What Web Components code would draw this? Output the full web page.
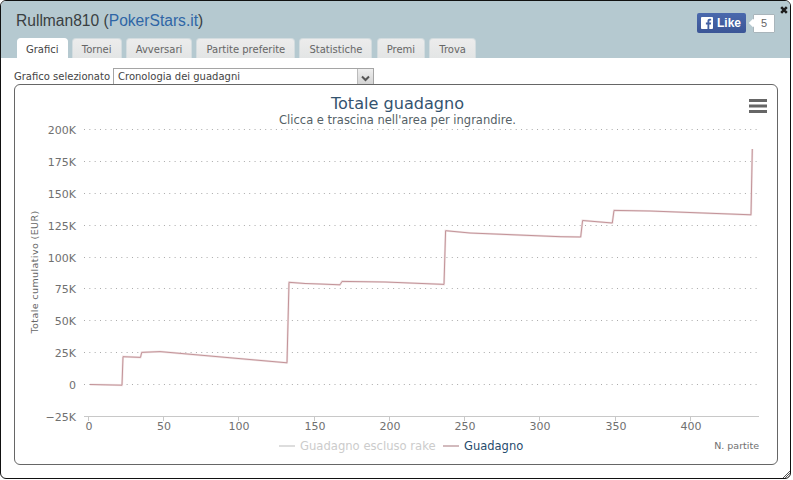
<!DOCTYPE html>
<html>
<head>
<meta charset="utf-8">
<title>Rullman810</title>
<style>
    html, body { margin: 0; padding: 0; background: #fff; }
</style>
</head>
<body>
<stats-window>
    <player-title slot="title" name="Rullman810" site="PokerStars.it"></player-title>
    <like-button slot="like" count="5"></like-button>
    <tab-bar slot="tabs" active="Grafici" items="Grafici|Tornei|Avversari|Partite preferite|Statistiche|Premi|Trova"></tab-bar>
    <chart-picker label="Grafico selezionato" value="Cronologia dei guadagni"></chart-picker>
    <earnings-chart></earnings-chart>
</stats-window>

<script>
class StatsWindow extends HTMLElement {
    constructor() {
        super();
        this.attachShadow({ mode: 'open' });
        this.shadowRoot.innerHTML = `
            <style>
                :host {
                    display: block;
                    box-sizing: border-box;
                    width: 791px;
                    height: 479px;
                    position: relative;
                    overflow: hidden;
                    background: #fff;
                    border: 1px solid #111;
                    border-radius: 6px;
                    font-family: "DejaVu Sans", sans-serif;
                }
                .head {
                    background: #b5c9d0;
                    height: 57px;
                    display: flex;
                    flex-direction: column;
                    justify-content: flex-end;
                }
                .top {
                    display: flex;
                    justify-content: space-between;
                    align-items: flex-start;
                    padding: 0 15px 0 15px;
                    height: 37px;
                }
                .body {
                    padding: 10px 12px 0 13px;
                }
                .close {
                    position: absolute;
                    right: 2px;
                    top: 5px;
                    width: 8px;
                    height: 8px;
                }
                .grip {
                    position: absolute;
                    right: 0;
                    bottom: 0;
                    width: 8px;
                    height: 8px;
                }
            </style>
            <div class="head">
                <div class="top">
                    <slot name="title"></slot>
                    <slot name="like"></slot>
                </div>
                <slot name="tabs"></slot>
                <svg class="close" viewBox="0 0 8 8">
                    <path d="M1.2 1.2 L6.8 6.8 M6.8 1.2 L1.2 6.8" stroke="#1c1c1c" stroke-width="2.5" fill="none"/>
                </svg>
            </div>
            <div class="body"><slot></slot></div>
            <svg class="grip" viewBox="0 0 8 8">
                <path d="M8 1 L1 8 M8 3 L3 8 M8 5 L5 8 M8 7 L7 8" stroke="#555" stroke-width="1" fill="none"/>
            </svg>
        `;
    }
}

class PlayerTitle extends HTMLElement {
    connectedCallback() {
        const root = this.attachShadow({ mode: 'open' });
        root.innerHTML = `
            <style>
                :host {
                    display: block;
                    font: 15.6px/20px "Liberation Sans", Arial, sans-serif;
                    color: #3a3f42;
                    padding-top: 10px;
                }
                a { color: #2f66a6; text-decoration: none; }
            </style>
            ${this.getAttribute('name')} (<a href="#">${this.getAttribute('site')}</a>)
        `;
    }
}

class LikeButton extends HTMLElement {
    connectedCallback() {
        const root = this.attachShadow({ mode: 'open' });
        root.innerHTML = `
            <style>
                :host {
                    display: flex;
                    align-items: flex-start;
                    margin-top: 12px;
                    font-family: "Liberation Sans", Arial, sans-serif;
                }
                .btn {
                    display: flex;
                    align-items: center;
                    gap: 4px;
                    box-sizing: border-box;
                    width: 49px;
                    height: 20px;
                    padding-left: 4px;
                    border-radius: 2px;
                    background: linear-gradient(#4a69ad, #3b5596);
                    color: #fff;
                    font-size: 12px;
                    font-weight: bold;
                }
                .count {
                    position: relative;
                    box-sizing: border-box;
                    margin: 1px 0 0 7px;
                    width: 22px;
                    height: 19px;
                    background: #fff;
                    border: 1px solid #a9b5bb;
                    border-radius: 1px;
                    color: #666;
                    font-size: 11px;
                    line-height: 17px;
                    text-align: center;
                }
                .count::before {
                    content: "";
                    position: absolute;
                    left: -4px;
                    top: 5px;
                    width: 6px;
                    height: 6px;
                    background: #fff;
                    transform: rotate(45deg);
                }
                svg { display: block; }
            </style>
            <div class="btn">
                <svg width="12" height="12" viewBox="0 0 13 13">
                    <rect width="13" height="13" rx="1" fill="#fff"/>
                    <path d="M9 13 V8 H10.7 L11 6 H9 V4.8 C9 4.2 9.3 3.9 9.9 3.9 H11 V2.1 C10.6 2 10.1 2 9.5 2 C8 2 7 2.9 7 4.5 V6 H5.3 V8 H7 V13 Z" fill="#4260a3"/>
                </svg>
                <span>Like</span>
            </div>
            <div class="count">${this.getAttribute('count')}</div>
        `;
    }
}

class TabBar extends HTMLElement {
    connectedCallback() {
        const active = this.getAttribute('active');
        const tabs = this.getAttribute('items').split('|').map(name =>
            `<div class="tab ${name === active ? 'on' : ''}">${name}</div>`).join('');
        const root = this.attachShadow({ mode: 'open' });
        root.innerHTML = `
            <style>
                :host {
                    display: flex;
                    gap: 4.2px;
                    height: 20px;
                    padding-left: 16px;
                    font-size: 10px;
                }
                .tab {
                    box-sizing: border-box;
                    height: 20px;
                    padding: 0 9px;
                    line-height: 21px;
                    color: #666;
                    background: linear-gradient(#ececec, #e3e5e5);
                    border: 1px solid #d3dcdf;
                    border-bottom: 0;
                    border-radius: 4px 4px 0 0;
                    white-space: nowrap;
                }
                .on {
                    padding: 0 8px;
                    background: #fff;
                    color: #444;
                    border-color: #fff;
                }
            </style>
            ${tabs}
        `;
    }
}

class ChartPicker extends HTMLElement {
    connectedCallback() {
        const root = this.attachShadow({ mode: 'open' });
        root.innerHTML = `
            <style>
                :host {
                    display: flex;
                    align-items: center;
                    gap: 3px;
                    height: 16px;
                    font-size: 10px;
                    color: #444;
                }
                .box {
                    box-sizing: border-box;
                    width: 261px;
                    height: 16px;
                    display: flex;
                    justify-content: space-between;
                    background: #fff;
                    border: 1px solid #a5a5a5;
                    border-bottom: 0;
                    line-height: 15px;
                    padding-left: 4px;
                }
                .arrow {
                    width: 15px;
                    background: linear-gradient(#eeeeee, #d4d4d4);
                    border-left: 1px solid #bbb;
                    display: flex;
                    align-items: center;
                    justify-content: center;
                }
                svg { margin-top: 3px; }
            </style>
            <span>${this.getAttribute('label')}</span>
            <div class="box">
                <span>${this.getAttribute('value')}</span>
                <div class="arrow">
                    <svg width="9" height="7" viewBox="0 0 9 7"><path d="M1 1.5 L4.5 5 L8 1.5" stroke="#555" stroke-width="2" fill="none"/></svg>
                </div>
            </div>
        `;
    }
}

class EarningsChart extends HTMLElement {
    connectedCallback() {
        const gridY = [[129.5, '200K'], [161.5, '175K'], [193.5, '150K'], [225.5, '125K'], [257.5, '100K'], [288.5, '75K'], [320.5, '50K'], [352.5, '25K'], [384.5, '0'], [416.5, '\u221225K']];
        const ticks = [[88.5, '0'], [163.5, '50'], [238.5, '100'], [314.5, '150'], [389.5, '200'], [464.5, '250'], [539.5, '300'], [615.5, '350'], [690.5, '400']];
        const line = [[90,384.5],[122,385.2],[123,356.7],[140.5,357.4],[141.7,352.4],[160,351.6],[287,362.8],[289,282.3],[305,283.5],[320,284],[340,284.8],[342,281.4],[385,282],[444,284.4],[445.6,230.7],[470,233],[560,236.7],[580.7,237],[582.6,220.5],[612.3,223],[614,210.4],[650,211],[751,214.8],[752.3,149]];
        // coordinates above are page pixels, the svg starts at the panel corner
        const ox = 15, oy = 85;
        const points = line.map(p => `${p[0] - ox},${p[1] - oy}`).join(' ');
        const grid = gridY.map(([y, label], i) => `
            ${i < gridY.length - 1 ? `<line x1="${84 - ox}" x2="${759 - ox}" y1="${y - oy}" y2="${y - oy}" stroke="#aaa" stroke-dasharray="1 4.33"/>` : ''}
            <text x="${76 - ox}" y="${y - oy + 4.5}" text-anchor="end" class="axis">${label}</text>`).join('');
        const xTicks = ticks.map(([x, label]) => `
            <line x1="${x - ox}" x2="${x - ox}" y1="${416.5 - oy}" y2="${421 - oy}" stroke="#c8c8c8"/>
            <text x="${x + 0.5 - ox}" y="${430 - oy}" text-anchor="middle" class="axis">${label}</text>`).join('');

        const root = this.attachShadow({ mode: 'open' });
        root.innerHTML = `
            <style>
                :host {
                    display: block;
                    box-sizing: border-box;
                    width: 764px;
                    height: 381px;
                    border: 1px solid #666;
                    border-radius: 6px;
                    overflow: hidden;
                }
                svg { display: block; font-family: "DejaVu Sans", sans-serif; }
                .axis { font-size: 11px; fill: #707070; }
            </style>
            <svg width="762" height="379" viewBox="0 0 762 379">
                ${grid}
                <line x1="${84 - ox}" x2="${759 - ox}" y1="${416.5 - oy}" y2="${416.5 - oy}" stroke="#c8c8c8"/>
                ${xTicks}
                <polyline points="${points}" fill="none" stroke="#f0e3e4" stroke-width="2.2"/>
                <polyline points="${points}" fill="none" stroke="#bd8a90" stroke-width="0.9"/>
                <text x="382.5" y="24" text-anchor="middle" font-size="16.1" fill="#34536f">Totale guadagno</text>
                <text x="382.5" y="38.5" text-anchor="middle" font-size="11.5" fill="#555f66">Clicca e trascina nell'area per ingrandire.</text>
                <path d="M734 15.5 H752 M734 21 H752 M734 26.5 H752" stroke="#666" stroke-width="3"/>
                <text x="${38 - ox}" y="${272 - oy}" transform="rotate(-90 ${38 - ox} ${272 - oy})" text-anchor="middle" font-size="9.5" letter-spacing="0.4" fill="#666">Totale cumulativo (EUR)</text>
                <line x1="${279 - ox}" x2="${295 - ox}" y1="${446 - oy}" y2="${446 - oy}" stroke="#ddd" stroke-width="2"/>
                <text x="${300 - ox}" y="${450 - oy}" font-size="11.6" fill="#ccc">Guadagno escluso rake</text>
                <line x1="${443 - ox}" x2="${459 - ox}" y1="${446 - oy}" y2="${446 - oy}" stroke="#d2babd" stroke-width="2"/>
                <text x="${464 - ox}" y="${450 - oy}" font-size="11.5" fill="#274b6d">Guadagno</text>
                <text x="${759 - ox}" y="${449 - oy}" text-anchor="end" font-size="9.5" fill="#707070">N. partite</text>
            </svg>
        `;
    }
}

customElements.define('stats-window', StatsWindow);
customElements.define('player-title', PlayerTitle);
customElements.define('like-button', LikeButton);
customElements.define('tab-bar', TabBar);
customElements.define('chart-picker', ChartPicker);
customElements.define('earnings-chart', EarningsChart);
</script>
</body>
</html>
